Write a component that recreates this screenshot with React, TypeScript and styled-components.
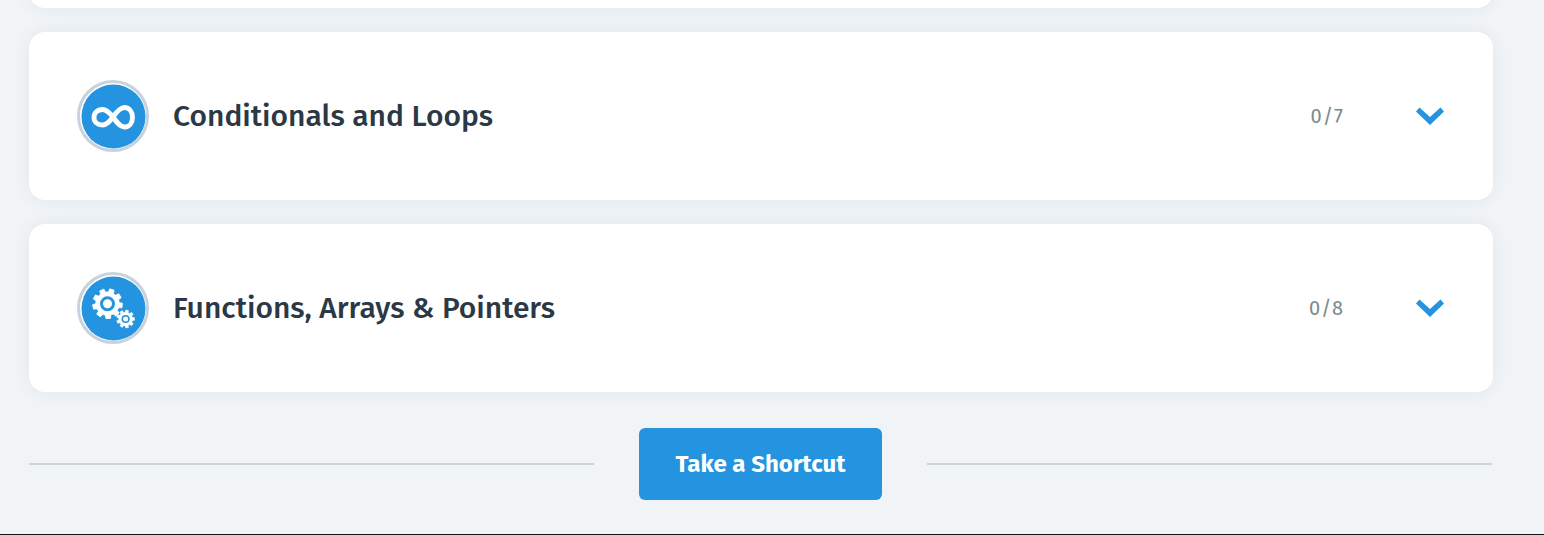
import React from "react";
import styled, { createGlobalStyle } from "styled-components";

const GlobalStyle = createGlobalStyle`
  * { box-sizing: border-box; }
  body {
    margin: 0;
    background: #f0f4f7;
    font-family: "Fira Sans", "Noto Sans", sans-serif;
    color: #2b3845;
  }
`;

const Page = styled.div`
  overflow: hidden;
  border-bottom: 1px solid #14181c;
`;

const Content = styled.main`
  display: flex;
  flex-direction: column;
  gap: 24px;
  padding: 0 51px 0 29px;
`;

const Card = styled.section`
  border-radius: 16px;
  background: #fff;
  box-shadow: 0 0 16px rgba(30, 50, 70, 0.07);
`;

const CardEnd = styled(Card)`
  height: 32px;
  margin-top: -24px;
`;

const CardHeader = styled.div`
  display: flex;
  align-items: center;
  padding: 48px 49px 48px 48px;
`;

const Badge = styled.span`
  display: flex;
  width: 72px;
  height: 72px;
  margin-right: 24px;
`;

const Title = styled.h2`
  flex: 1;
  margin: 0;
  font-size: 30px;
  line-height: 40px;
  font-weight: 500;
`;

const Count = styled.span`
  margin-right: 72px;
  font-size: 20px;
  line-height: 24px;
  letter-spacing: 1px;
  color: #7b8a8b;
`;

const Toggle = styled.button`
  display: flex;
  padding: 0;
  border: 0;
  background: none;
  cursor: pointer;
`;

const ShortcutRow = styled.div`
  display: flex;
  align-items: center;
  gap: 45px;
  margin: 12px 1px 34px 0;
`;

const Rule = styled.hr`
  flex: 1;
  height: 2px;
  margin: 0;
  border: 0;
  background: #ccd5d6;
`;

const ShortcutButton = styled.button`
  width: 243px;
  height: 72px;
  padding: 0;
  border: 0;
  border-radius: 6px;
  background: #2493e0;
  color: #fff;
  font-family: inherit;
  font-size: 24px;
  line-height: 28px;
  font-weight: 700;
  cursor: pointer;
`;

const gearPath = (cx: number, cy: number, outer: number, inner: number, teeth: number, turn: number) => {
  const step = (Math.PI * 2) / teeth;
  const points: string[] = [];
  for (let i = 0; i < teeth; i++) {
    const mid = i * step + turn;
    [[-0.32, inner], [-0.22, outer], [0.22, outer], [0.32, inner]].forEach(([offset, radius]) => {
      const angle = mid + offset * step;
      points.push(`${(cx + radius * Math.cos(angle)).toFixed(2)} ${(cy + radius * Math.sin(angle)).toFixed(2)}`);
    });
  }
  return `M${points.join("L")}Z`;
};

const Disc = () => (
  <>
    <circle cx="36" cy="36" r="34.5" fill="#fff" stroke="#c8d2dc" strokeWidth="3" />
    <circle cx="36.5" cy="36.5" r="32" fill="#2493e0" />
  </>
);

const LoopIcon = () => (
  <svg width="72" height="72" viewBox="0 0 72 72" aria-hidden="true">
    <Disc />
    <path
      d="M36 37C32 32 29 29.5 25.5 29.5C20.5 29.5 17 33 17 37.5C17 42 20.5 45 25.5 45C30 45 33 41 36 37C39.5 32 43 27.5 47.5 27.5C52.5 27.5 55.5 32 55.5 37.2C55.5 43 52.5 47 47.5 47C43 47 39.5 42 36 37Z"
      fill="none"
      stroke="#fff"
      strokeWidth="4.8"
      strokeLinejoin="round"
    />
  </svg>
);

const GearsIcon = () => (
  <svg width="72" height="72" viewBox="0 0 72 72" aria-hidden="true">
    <Disc />
    <g fill="#fff" stroke="#fff" strokeLinejoin="round">
      <path d={gearPath(30.5, 31.7, 15, 11.8, 9, -1.27)} strokeWidth="0.8" />
      <path d={gearPath(48.6, 47, 9, 6.9, 9, -1.4)} strokeWidth="0.5" />
    </g>
    <g fill="#fff" stroke="#2493e0">
      <circle cx="30.5" cy="31.7" r="6" strokeWidth="3" />
      <circle cx="48.6" cy="47" r="3.3" strokeWidth="1.6" />
    </g>
  </svg>
);

const Chevron = () => (
  <svg width="28" height="18" viewBox="0 0 28 18" aria-hidden="true">
    <path d="M3.5 0.5L14 10L24.5 0.5L28 4.5L14 18L0 4.5Z" fill="#2493e0" />
  </svg>
);

const topics = [
  { title: "Conditionals and Loops", count: "0/7", icon: <LoopIcon /> },
  { title: "Functions, Arrays & Pointers", count: "0/8", icon: <GearsIcon /> },
];

export default function App() {
  return (
    <>
      <GlobalStyle />
      <Page>
        <Content>
          <CardEnd />
          {topics.map(({ title, count, icon }) => (
            <Card key={title}>
              <CardHeader>
                <Badge>{icon}</Badge>
                <Title>{title}</Title>
                <Count>{count}</Count>
                <Toggle type="button" aria-expanded={false} aria-label={`Show ${title}`}>
                  <Chevron />
                </Toggle>
              </CardHeader>
            </Card>
          ))}
          <ShortcutRow>
            <Rule />
            <ShortcutButton type="button">Take a Shortcut</ShortcutButton>
            <Rule />
          </ShortcutRow>
        </Content>
      </Page>
    </>
  );
}
